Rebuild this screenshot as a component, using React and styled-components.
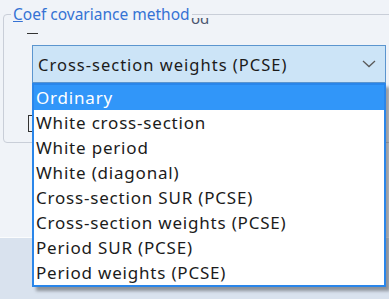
import React from "react";
import styled, { createGlobalStyle } from "styled-components";

const options = [
    "Ordinary",
    "White cross-section",
    "White period",
    "White (diagonal)",
    "Cross-section SUR (PCSE)",
    "Cross-section weights (PCSE)",
    "Period SUR (PCSE)",
    "Period weights (PCSE)",
];

function App() {
    const selected = 0;
    return (
        <>
            <GlobalStyle />
            <Page>
                <TopPanel>
                    <GroupBox>
                        <Legend>
                            <u>C</u>oef covariance method
                        </Legend>
                        <Ghost>od</Ghost>
                        <Dash />
                        <HiddenCheck />
                        <ComboWrap>
                            <Combo>
                                <ComboText>Cross-section weights (PCSE)</ComboText>
                                <svg width="14" height="8" viewBox="0 0 14 8">
                                    <path
                                        d="M1 1 L7 6.5 L13 1"
                                        fill="none"
                                        stroke="#5a5a5a"
                                        strokeWidth="1.3"
                                    />
                                </svg>
                            </Combo>
                            <DropList>
                                {options.map((o, i) => (
                                    <Option key={o} $active={i === selected}>
                                        {o}
                                    </Option>
                                ))}
                            </DropList>
                        </ComboWrap>
                    </GroupBox>
                </TopPanel>
                <BottomBar />
            </Page>
        </>
    );
}

export default App;

const GlobalStyle = createGlobalStyle`
    body {
        margin: 0;
        overflow: hidden;
        font-family: "Noto Sans", "Open Sans", sans-serif;
    }
`;
const Page = styled.div`
    width: 389px;
    height: 299px;
    display: flex;
    flex-direction: column;
    overflow: hidden;
    background: #f0f3f8;
`;
const TopPanel = styled.div`
    height: 238px;
    box-sizing: border-box;
    padding: 5px 0 0 3px;
    border-bottom: 1px solid #fbfcfd;
    background: #f0f3f8;
`;
const GroupBox = styled.fieldset`
    position: relative;
    margin: 0;
    padding: 0;
    width: 420px;
    height: 138px;
    box-sizing: border-box;
    border: 1px solid #c9ced8;
    border-radius: 4px;
`;
const Legend = styled.legend`
    margin-left: 7px;
    padding: 0 2px;
    font-size: 15.5px;
    line-height: 18px;
    color: #3572d4;
    u {
        text-decoration-color: #3572d4;
    }
`;
const Ghost = styled.span`
    position: absolute;
    left: 187px;
    top: -15px;
    font-size: 15px;
    color: #4a5670;
    clip-path: inset(10px 0 0 0);
`;
const Dash = styled.span`
    position: absolute;
    left: 23px;
    top: 10px;
    width: 11px;
    height: 1px;
    background: #333;
`;
const HiddenCheck = styled.span`
    position: absolute;
    left: 24px;
    top: 92px;
    width: 14px;
    height: 17px;
    border: 1px solid #333;
    box-sizing: border-box;
`;
const ComboWrap = styled.div`
    position: relative;
    margin: 22px 0 0 28px;
    width: 354px;
`;
const Combo = styled.div`
    height: 38px;
    box-sizing: border-box;
    display: flex;
    align-items: center;
    justify-content: space-between;
    padding: 0 9px 0 5px;
    background: #cce4f7;
    border: 1px solid #5b95cf;
`;
const ComboText = styled.span`
    font-size: 16.5px;
    letter-spacing: 1px;
    color: #1b1b1b;
`;
const DropList = styled.div`
    position: absolute;
    top: 100%;
    left: 0;
    width: 354px;
    box-sizing: border-box;
    border: 2px solid #2a86ea;
    background: #fff;
    box-shadow: 4px 4px 3px rgba(0, 0, 0, 0.35);
    z-index: 2;
`;
const Option = styled.div`
    height: 25px;
    line-height: 25px;
    padding-left: 2px;
    font-size: 17px;
    letter-spacing: 0.8px;
    color: ${(p) => (p.$active ? "#fff" : "#1b1b1b")};
    background: ${(p) => (p.$active ? "#3196f9" : "#fff")};
`;
const BottomBar = styled.div`
    flex: 1;
    background: #d9e2ee;
`;
